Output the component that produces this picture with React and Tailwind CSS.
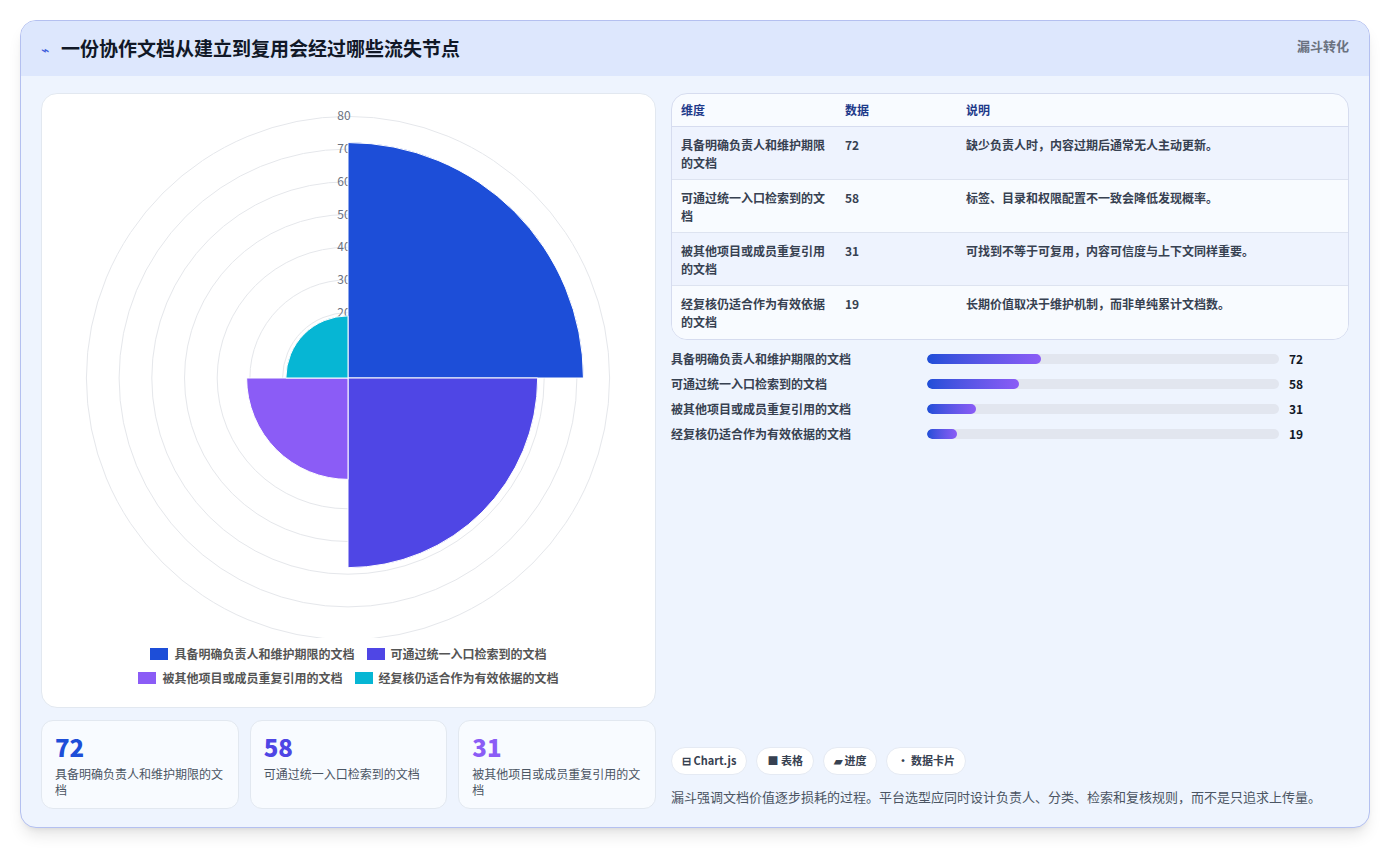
const F = { fontFamily: '"Noto Sans CJK SC","Noto Sans",sans-serif' };
const rows = [
  ["具备明确负责人和维护期限的文档", 72, "缺少负责人时，内容过期后通常无人主动更新。"],
  ["可通过统一入口检索到的文档", 58, "标签、目录和权限配置不一致会降低发现概率。"],
  ["被其他项目或成员重复引用的文档", 31, "可找到不等于可复用，内容可信度与上下文同样重要。"],
  ["经复核仍适合作为有效依据的文档", 19, "长期价值取决于维护机制，而非单纯累计文档数。"],
];
const colors = ["#1d4ed8", "#4f46e5", "#8b5cf6", "#06b6d4"];
function sector(cx, cy, r, a0, a1) {
  const p = (a) => [cx + r * Math.cos(a), cy + r * Math.sin(a)];
  const [x0, y0] = p(a0), [x1, y1] = p(a1);
  return `M${cx},${cy} L${x0},${y0} A${r},${r} 0 0 1 ${x1},${y1} Z`;
}
function Polar() {
  const cx = 307, cy = 280, k = 3.27;
  return (
    <svg width="615" height="540" className="block">
      {[1,2,3,4,5,6,7,8].map(i => <circle key={i} cx={cx} cy={cy} r={i*10*k} fill="none" stroke="#e5e7eb" strokeWidth="1" />)}
      {[2,3,4,5,6,7,8].map(i => <text key={i} x={cx-4} y={cy - i*10*k + 4} textAnchor="middle" fontSize="12" fill="#6b7280" style={F}>{i*10}</text>)}
      {rows.map((r, i) => {
        const a0 = -Math.PI/2 + i*Math.PI/2;
        return <path key={i} d={sector(cx, cy, r[1]*k, a0, a0 + Math.PI/2)} fill={colors[i]} stroke="#fff" strokeWidth="1" />;
      })}
    </svg>
  );
}
export default function App() {
  return (
    <div style={F} className="w-[1390px] h-[848px] bg-white p-5">
      <div className="h-[808px] rounded-2xl border border-[#b4c0f0] bg-[#eef4fe] overflow-hidden flex flex-col shadow-lg">
        <div className="h-[55px] bg-[#dde7fd] flex items-center justify-between px-5 shrink-0">
          <div className="flex items-center gap-3">
            <span className="text-[#3b5bdb] text-sm">⌁</span>
            <span className="text-[19px] font-bold text-[#111827]">一份协作文档从建立到复用会经过哪些流失节点</span>
          </div>
          <span className="text-[13px] font-bold text-[#6b7280] self-start mt-[15px]">漏斗转化</span>
        </div>
        <div className="flex gap-[15px] px-5 pt-[17px] flex-1">
          <div className="w-[615px] flex flex-col gap-3">
            <div className="h-[615px] bg-white rounded-2xl border border-[#e2e8f0] flex flex-col items-center pt-1">
              <Polar />
              <div className="flex flex-col items-center gap-[6px] text-[12px] font-bold text-[#555] mt-[7px]">
                <div className="flex gap-3">
                  {[0,1].map(i => <div key={i} className="flex items-center gap-[6px]"><span className="w-[18px] h-[12px]" style={{background: colors[i]}} />{rows[i][0]}</div>)}
                </div>
                <div className="flex gap-3">
                  {[2,3].map(i => <div key={i} className="flex items-center gap-[6px]"><span className="w-[18px] h-[12px]" style={{background: colors[i]}} />{rows[i][0]}</div>)}
                </div>
              </div>
            </div>
            <div className="grid grid-cols-3 gap-[11px]">
              {[0,1,2].map(i => (
                <div key={i} className="h-[89px] bg-[#f8fbff] rounded-xl border border-[#e2e8f0] px-[13px] pt-[12px]">
                  <div className="text-[24px] font-extrabold leading-[28px]" style={{color: colors[i]}}>{rows[i][1]}</div>
                  <div className="text-[12px] text-[#4b5563] leading-[16px] mt-[5px]">{rows[i][0]}</div>
                </div>
              ))}
            </div>
          </div>
          <div className="flex-1 flex flex-col">
            <div className="rounded-2xl border border-[#d6dcef] overflow-hidden bg-[#f8fbff]">
              <div className="flex h-[33px] items-center text-[12px] font-bold text-[#1e3a8a] border-b border-[#d6dcef] px-[9px]">
                <div className="w-[164px]">维度</div><div className="w-[121px]">数据</div><div>说明</div>
              </div>
              {rows.map((r, i) => (
                <div key={i} className={`flex h-[53px] pt-[9px] px-[9px] text-[12px] font-bold text-[#374151] leading-[18px] ${i%2===0 ? "bg-[#eef3fe]" : "bg-[#f8fbff]"} ${i<3 ? "border-b border-[#dde3f0]" : ""}`}>
                  <div className="w-[164px] pr-4">{r[0]}</div><div className="w-[121px]">{r[1]}</div><div>{r[2]}</div>
                </div>
              ))}
            </div>
            <div className="flex flex-col gap-[6px] mt-[9px]">
              {rows.map((r, i) => (
                <div key={i} className="flex items-center h-[19px] text-[12px] font-bold text-[#374151]">
                  <div className="w-[256px]">{r[0]}</div>
                  <div className="w-[352px] h-[10px] rounded-full bg-[#e2e6ef] overflow-hidden">
                    <div className="h-full rounded-full bg-gradient-to-r from-[#1d4ed8] to-[#8b5cf6]" style={{width: `${r[1]*0.45}%`}} />
                  </div>
                  <div className="ml-[10px] text-[#111827]">{r[1]}</div>
                </div>
              ))}
            </div>
            <div className="mt-auto mb-[21px]">
              <div className="flex gap-[9px]">
                {["⊟ Chart.js", "■ 表格", "▰ 进度", "• 数据卡片"].map(t => (
                  <span key={t} className="h-[28px] px-[10px] flex items-center rounded-full bg-white border border-[#e5eaf3] text-[11px] font-bold text-[#374151]">{t}</span>
                ))}
              </div>
              <div className="mt-[12px] text-[13px] text-[#4b5563]">漏斗强调文档价值逐步损耗的过程。平台选型应同时设计负责人、分类、检索和复核规则，而不是只追求上传量。</div>
            </div>
          </div>
        </div>
      </div>
    </div>
  );
}
